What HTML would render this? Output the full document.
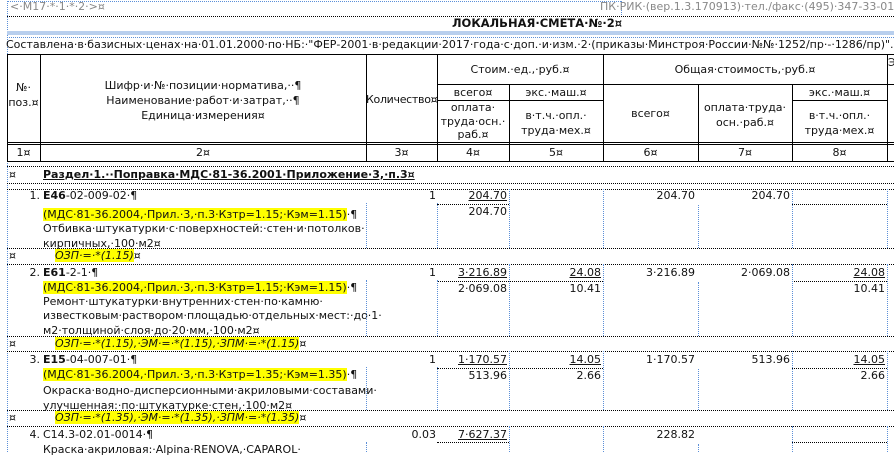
<!DOCTYPE html>
<html><head><meta charset="utf-8">
<style>
body{margin:0;width:894px;height:452px;overflow:hidden;background:#fff;font-family:"DejaVu Sans","Liberation Sans",sans-serif;font-size:11px;color:#111;position:relative}
.t{position:absolute;white-space:nowrap;line-height:14px}
.r{text-align:right}
.c{text-align:center}
.hl{background:#ffff00}
.b{font-weight:bold}
.u{text-decoration:underline}
.g{color:#888}
.hd{position:absolute;height:0;border-top:1px dotted #000}
.hs{position:absolute;height:0;border-top:1px solid #000}
.vs{position:absolute;width:0;border-left:1px solid #000}
.vb{position:absolute;width:0;border-left:1px dotted #5b8fd8}
.hb{position:absolute;height:0;border-top:1px dotted #5b8fd8}
</style></head><body>

<!-- top -->
<div class="hb" style="left:7px;top:1px;width:614px"></div>
<div class="vb" style="left:7px;top:1px;height:451px"></div>
<div class="vb" style="left:621px;top:1px;height:14px"></div>
<div class="t g" style="left:10px;top:0px">&lt;·М17·*·1·*·2·&gt;¤</div>
<div class="t g" style="left:600px;top:0px;width:286px;text-align:right">ПК·РИК·(вер.1.3.170913)·тел./факс·(495)·347-33-01</div>
<div class="hd" style="left:7px;top:16px;width:887px"></div>
<div class="t b" style="left:452px;top:16px;font-size:11.5px">ЛОКАЛЬНАЯ·СМЕТА·№·2¤</div>
<div style="position:absolute;left:7px;top:31px;width:887px;height:4px;background:#b8cfee"></div>
<div class="hb" style="left:7px;top:37px;width:887px"></div>
<div class="t" style="left:6px;top:38px">Составлена·в·базисных·ценах·на·01.01.2000·по·НБ:·"ФЕР-2001·в·редакции·2017·года·с·доп.·и·изм.·2·(приказы·Минстроя·России·№№·1252/пр·-·1286/пр)".¤</div>

<!-- header grid -->
<div class="hs" style="left:7px;top:54px;width:887px"></div>
<div class="hs" style="left:7px;top:142px;width:887px"></div>
<div class="hs" style="left:7px;top:144px;width:887px"></div>
<div class="hs" style="left:7px;top:161px;width:887px"></div>
<div class="hs" style="left:437px;top:84px;width:457px"></div>
<div class="hs" style="left:437px;top:100px;width:72px"></div>
<div class="hs" style="left:509px;top:100px;width:94px"></div>
<div class="hs" style="left:792px;top:100px;width:95px"></div>
<div class="vs" style="left:7px;top:54px;height:107px"></div>
<div class="vs" style="left:40px;top:54px;height:107px"></div>
<div class="vs" style="left:366px;top:54px;height:107px"></div>
<div class="vs" style="left:437px;top:54px;height:107px"></div>
<div class="vs" style="left:509px;top:84px;height:77px"></div>
<div class="vs" style="left:603px;top:54px;height:107px"></div>
<div class="vs" style="left:698px;top:84px;height:77px"></div>
<div class="vs" style="left:792px;top:84px;height:77px"></div>
<div class="vs" style="left:887px;top:54px;height:107px"></div>

<div class="t c" style="left:7px;top:80px;width:33px;line-height:15px">№·<br>поз.¤</div>
<div class="t c" style="left:40px;top:78px;width:326px;line-height:15px">Шифр·и·№·позиции·норматива,··¶<br>Наименование·работ·и·затрат,··¶<br>Единица·измерения¤</div>
<div class="t c" style="left:366px;top:93px;width:71px;letter-spacing:-0.3px">Количество¤</div>
<div class="t c" style="left:437px;top:63px;width:166px">Стоим.·ед.,·руб.¤</div>
<div class="t c" style="left:603px;top:63px;width:284px">Общая·стоимость,·руб.¤</div>
<div class="t" style="left:888px;top:56px">Э</div>
<div class="t c" style="left:437px;top:86px;width:72px">всего¤</div>
<div class="t c" style="left:509px;top:86px;width:94px">экс.·маш.¤</div>
<div class="t c" style="left:792px;top:86px;width:95px">экс.·маш.¤</div>
<div class="t c" style="left:437px;top:101px;width:72px;line-height:13.5px">оплата·<br>труда·осн.·<br>раб.¤</div>
<div class="t c" style="left:509px;top:108px;width:94px;line-height:15px">в·т.ч.·опл.·<br>труда·мех.¤</div>
<div class="t c" style="left:603px;top:107px;width:95px">всего¤</div>
<div class="t c" style="left:698px;top:100px;width:94px;line-height:15px">оплата·труда·<br>осн.·раб.¤</div>
<div class="t c" style="left:792px;top:108px;width:95px;line-height:15px">в·т.ч.·опл.·<br>труда·мех.¤</div>

<div class="t c" style="left:7px;top:146px;width:33px">1¤</div>
<div class="t c" style="left:40px;top:146px;width:326px">2¤</div>
<div class="t c" style="left:366px;top:146px;width:71px">3¤</div>
<div class="t c" style="left:437px;top:146px;width:72px">4¤</div>
<div class="t c" style="left:509px;top:146px;width:94px">5¤</div>
<div class="t c" style="left:603px;top:146px;width:95px">6¤</div>
<div class="t c" style="left:698px;top:146px;width:94px">7¤</div>
<div class="t c" style="left:792px;top:146px;width:95px">8¤</div>

<!-- body horizontals -->
<div class="hd" style="left:7px;top:166px;width:887px"></div>
<div class="hd" style="left:7px;top:183px;width:887px"></div>
<div class="hd" style="left:7px;top:189px;width:887px"></div>
<div class="hd" style="left:7px;top:248px;width:887px"></div>
<div class="hd" style="left:7px;top:264px;width:887px"></div>
<div class="hd" style="left:7px;top:336px;width:887px"></div>
<div class="hd" style="left:7px;top:351px;width:887px"></div>
<div class="hd" style="left:7px;top:410px;width:887px"></div>
<div class="hd" style="left:7px;top:426px;width:887px"></div>

<div class="t" style="left:9px;top:168px">¤</div>
<div class="t b u" style="left:43px;top:168px">Раздел·1.··Поправка·МДС·81-36.2001·Приложение·3,·п.3¤</div>

<!-- row1 -->
<div class="t r" style="left:7px;top:189px;width:33px">1.</div>
<div class="t" style="left:43px;top:189px"><b>Е46</b>-02-009-02·¶</div>
<div class="t" style="left:43px;top:208px"><span class="hl">(МДС·81-36.2004,·Прил.·3,·п.3·Кзтр=1.15;·Кэм=1.15)</span>·¶</div>
<div class="t" style="left:43px;top:222px;line-height:14.5px">Отбивка·штукатурки·с·поверхностей:·стен·и·потолков·<br>кирпичных,·100·м2¤</div>
<div class="t r" style="left:366px;top:189px;width:70px">1</div>
<div class="t r u" style="left:437px;top:189px;width:70px">204.70</div>
<div class="t r" style="left:437px;top:205px;width:70px">204.70</div>
<div class="t r" style="left:603px;top:189px;width:92px">204.70</div>
<div class="t r" style="left:698px;top:189px;width:92px">204.70</div>
<div class="hd" style="left:437px;top:204px;width:72px"></div>
<div class="hd" style="left:792px;top:204px;width:95px"></div>
<div class="t" style="left:9px;top:249px">¤</div>
<div class="t" style="left:55px;top:249px;font-style:italic"><span class="hl">ОЗП·=·*(1.15)</span>¤</div>

<!-- row2 -->
<div class="t r" style="left:7px;top:266px;width:33px">2.</div>
<div class="t" style="left:43px;top:266px"><b>Е61</b>-2-1·¶</div>
<div class="t" style="left:43px;top:281px"><span class="hl">(МДС·81-36.2004,·Прил.·3,·п.3·Кзтр=1.15;·Кэм=1.15)</span>·¶</div>
<div class="t" style="left:43px;top:295px;line-height:14.3px">Ремонт·штукатурки·внутренних·стен·по·камню·<br>известковым·раствором·площадью·отдельных·мест:·до·1·<br>м2·толщиной·слоя·до·20·мм,·100·м2¤</div>
<div class="t r" style="left:366px;top:266px;width:70px">1</div>
<div class="t r u" style="left:437px;top:266px;width:70px">3·216.89</div>
<div class="t r" style="left:437px;top:282px;width:70px">2·069.08</div>
<div class="t r u" style="left:509px;top:266px;width:92px">24.08</div>
<div class="t r" style="left:509px;top:282px;width:92px">10.41</div>
<div class="t r" style="left:603px;top:266px;width:92px">3·216.89</div>
<div class="t r" style="left:698px;top:266px;width:92px">2·069.08</div>
<div class="t r u" style="left:792px;top:266px;width:93px">24.08</div>
<div class="t r" style="left:792px;top:282px;width:93px">10.41</div>
<div class="hd" style="left:437px;top:281px;width:166px"></div>
<div class="hd" style="left:792px;top:281px;width:95px"></div>
<div class="t" style="left:9px;top:337px">¤</div>
<div class="t" style="left:55px;top:337px;font-style:italic"><span class="hl">ОЗП·=·*(1.15),·ЭМ·=·*(1.15),·ЗПМ·=·*(1.15)</span>¤</div>

<!-- row3 -->
<div class="t r" style="left:7px;top:353px;width:33px">3.</div>
<div class="t" style="left:43px;top:353px"><b>Е15</b>-04-007-01·¶</div>
<div class="t" style="left:43px;top:368px"><span class="hl">(МДС·81-36.2004,·Прил.·3,·п.3·Кзтр=1.35;·Кэм=1.35)</span>·¶</div>
<div class="t" style="left:43px;top:384px;line-height:14.5px">Окраска·водно-дисперсионными·акриловыми·составами·<br>улучшенная:·по·штукатурке·стен,·100·м2¤</div>
<div class="t r" style="left:366px;top:353px;width:70px">1</div>
<div class="t r u" style="left:437px;top:353px;width:70px">1·170.57</div>
<div class="t r" style="left:437px;top:369px;width:70px">513.96</div>
<div class="t r u" style="left:509px;top:353px;width:92px">14.05</div>
<div class="t r" style="left:509px;top:369px;width:92px">2.66</div>
<div class="t r" style="left:603px;top:353px;width:92px">1·170.57</div>
<div class="t r" style="left:698px;top:353px;width:92px">513.96</div>
<div class="t r u" style="left:792px;top:353px;width:93px">14.05</div>
<div class="t r" style="left:792px;top:369px;width:93px">2.66</div>
<div class="hd" style="left:437px;top:368px;width:166px"></div>
<div class="hd" style="left:792px;top:368px;width:95px"></div>
<div class="t" style="left:9px;top:411px">¤</div>
<div class="t" style="left:55px;top:411px;font-style:italic"><span class="hl">ОЗП·=·*(1.35),·ЭМ·=·*(1.35),·ЗПМ·=·*(1.35)</span>¤</div>

<!-- row4 -->
<div class="t r" style="left:7px;top:428px;width:33px">4.</div>
<div class="t" style="left:43px;top:428px">С14.3-02.01-0014·¶</div>
<div class="t" style="left:43px;top:443px">Краска·акриловая:·Alpina·RENOVA,·CAPAROL·</div>
<div class="t r" style="left:366px;top:428px;width:70px">0.03</div>
<div class="t r u" style="left:437px;top:428px;width:70px">7·627.37</div>
<div class="t r" style="left:603px;top:428px;width:92px">228.82</div>
<div class="hd" style="left:437px;top:442px;width:72px"></div>
<div class="hd" style="left:792px;top:442px;width:95px"></div>

<!-- body verticals -->
<div class="vb" style="left:366px;top:203px;height:45px"></div>
<div class="vb" style="left:366px;top:280px;height:56px"></div>
<div class="vb" style="left:366px;top:367px;height:43px"></div>
<div class="vb" style="left:366px;top:442px;height:10px"></div>
<div class="vb" style="left:437px;top:203px;height:45px"></div>
<div class="vb" style="left:437px;top:280px;height:56px"></div>
<div class="vb" style="left:437px;top:367px;height:43px"></div>
<div class="vb" style="left:509px;top:189px;height:59px"></div>
<div class="vb" style="left:509px;top:264px;height:72px"></div>
<div class="vb" style="left:509px;top:351px;height:59px"></div>
<div class="vb" style="left:509px;top:426px;height:26px"></div>
<div class="vb" style="left:603px;top:189px;height:59px"></div>
<div class="vb" style="left:603px;top:264px;height:72px"></div>
<div class="vb" style="left:603px;top:351px;height:59px"></div>
<div class="vb" style="left:603px;top:426px;height:26px"></div>
<div class="vb" style="left:698px;top:205px;height:43px"></div>
<div class="vb" style="left:698px;top:282px;height:54px"></div>
<div class="vb" style="left:698px;top:369px;height:41px"></div>
<div class="vb" style="left:698px;top:444px;height:8px"></div>
<div class="vb" style="left:792px;top:189px;height:59px"></div>
<div class="vb" style="left:792px;top:264px;height:72px"></div>
<div class="vb" style="left:792px;top:351px;height:59px"></div>
<div class="vb" style="left:792px;top:426px;height:26px"></div>
<div class="vb" style="left:887px;top:189px;height:59px"></div>
<div class="vb" style="left:887px;top:264px;height:72px"></div>
<div class="vb" style="left:887px;top:351px;height:59px"></div>
<div class="vb" style="left:887px;top:426px;height:26px"></div>
</body></html>
